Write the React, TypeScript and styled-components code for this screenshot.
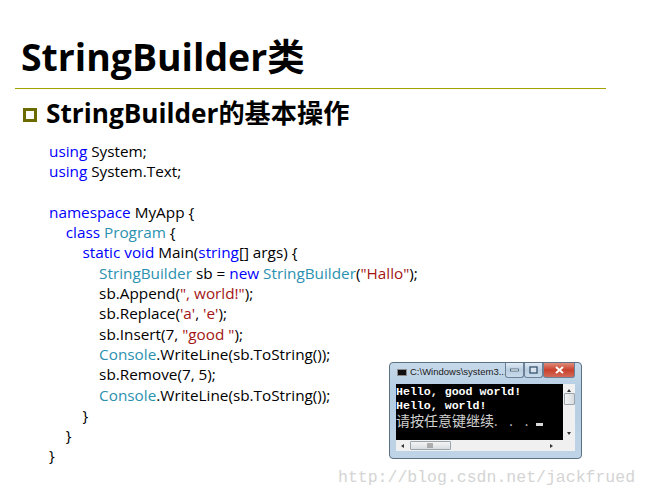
import React from "react";
import styled, { createGlobalStyle } from "styled-components";

const GlobalStyle = createGlobalStyle`
  html, body {
    margin: 0;
    padding: 0;
    background: #ffffff;
  }
`;

const Slide = styled.div`
  position: relative;
  width: 648px;
  height: 497px;
  overflow: hidden;
  background: #ffffff;
  font-family: "Open Sans", "Noto Sans CJK SC", sans-serif;
  color: #000000;
`;

const Title = styled.h1`
  margin: 0;
  padding: 32px 0 0 21px;
  height: 56px;
  font-size: 37.4px;
  line-height: 50px;
  font-weight: 700;
`;

const Rule = styled.div`
  margin-left: 15px;
  width: 591px;
  height: 1px;
  background: #a3a300;
`;

const Heading = styled.div`
  display: flex;
  align-items: center;
  gap: 9px;
  padding: 6px 0 0 23px;
  height: 36px;
  font-size: 26.2px;
  line-height: 36px;
  font-weight: 700;
`;

const Bullet = styled.span`
  display: block;
  box-sizing: border-box;
  width: 14px;
  height: 14px;
  margin-top: 4px;
  border: 3px solid #6b6b00;
  background: #ffffff;
`;

const Code = styled.div`
  margin: 10px 0 0 49px;
  font-size: 15.3px;
  line-height: 20.3px;
`;

const Line = styled.div<{ $depth?: number }>`
  height: 20.3px;
  white-space: pre;
  padding-left: ${(p) => (p.$depth ?? 0) * 16.7}px;
`;

const Kw = styled.span`
  color: #0000ff;
`;
const Type = styled.span`
  color: #2b91af;
`;
const Str = styled.span`
  color: #a31515;
`;

const ConsoleWindow = styled.div`
  position: absolute;
  left: 389px;
  top: 362px;
  box-sizing: border-box;
  width: 193px;
  height: 97px;
  padding: 0 6px 6px 6px;
  display: flex;
  flex-direction: column;
  border: 1px solid #5b7184;
  border-radius: 4px;
  background: linear-gradient(#c6d9ea, #b5cde2 30%, #bfd4e6);
`;

const TitleBar = styled.div`
  height: 21px;
  display: flex;
  align-items: flex-start;
  gap: 3px;
  font-family: "Liberation Sans", sans-serif;
  font-size: 9.5px;
  line-height: 18px;
  color: #1a1a1a;
`;

const AppIcon = styled.span`
  flex: none;
  width: 10px;
  height: 7px;
  margin: 6px 0 0 1px;
  background: #111111;
  border: 1px solid #8a8a8a;
  box-sizing: border-box;
`;

const TitleText = styled.span`
  flex: 1;
  min-width: 0;
  white-space: nowrap;
`;

const Controls = styled.div`
  flex: none;
  display: flex;
`;

const ControlButton = styled.span<{ $kind: "small" | "close" }>`
  display: flex;
  align-items: center;
  justify-content: center;
  box-sizing: border-box;
  width: ${(p) => (p.$kind === "close" ? 32 : 19)}px;
  height: 15px;
  border: 1px solid #6c8198;
  border-top: none;
  border-radius: 0 0 3px 3px;
  background: ${(p) =>
    p.$kind === "close"
      ? "linear-gradient(#e08d7c, #c9412c 50%, #d26a58)"
      : "linear-gradient(#e0ebf5, #b8cde0 50%, #c9dbea)"};
`;

const ConsoleBody = styled.div`
  display: grid;
  grid-template-columns: 167px 12px;
  grid-template-rows: 56px 11px;
`;

const Screen = styled.div`
  position: relative;
  background: #000000;
  color: #ffffff;
  padding: 1px 0 0 0;
  font-family: "Liberation Mono", "Noto Sans CJK SC", monospace;
  font-size: 11.6px;
  line-height: 14px;
  font-weight: 700;
  white-space: pre;
`;

const PromptLine = styled.div`
  font-family: "Noto Sans CJK SC", sans-serif;
  font-weight: 400;
  font-size: 14px;
  line-height: 15px;
  color: #d0d0d0;
`;

const PromptDots = styled.span`
  letter-spacing: 4.4px;
  font-size: 13px;
`;

const Caret = styled.span`
  position: absolute;
  left: 140px;
  top: 39px;
  width: 7px;
  height: 3px;
  background: #d8d8d8;
`;

const VScroll = styled.div`
  display: flex;
  flex-direction: column;
  align-items: center;
  background: #f0f0f0;
  color: #333333;
`;

const VThumb = styled.div`
  box-sizing: border-box;
  width: 11px;
  height: 12px;
  margin: 1px 0 auto;
  border: 1px solid #9aa5ad;
  border-radius: 1px;
  background: linear-gradient(90deg, #f4f4f4, #d9dde0);
`;

const Arrow = styled.span<{ $dir: "up" | "down" | "left" | "right" }>`
  display: block;
  width: 0;
  height: 0;
  border: 2px solid transparent;
  ${(p) =>
    p.$dir === "up"
      ? "border-bottom: 3px solid #333; border-top: 0; margin-top: 5px;"
      : p.$dir === "down"
      ? "border-top: 3px solid #333; border-bottom: 0; margin-bottom: 5px;"
      : p.$dir === "left"
      ? "border-right: 3px solid #333; border-left: 0;"
      : "border-left: 3px solid #333; border-right: 0;"}
`;

const HScroll = styled.div`
  display: flex;
  align-items: center;
  padding: 0 10px 0 5px;
  background: #f0f0f0;
`;

const HThumb = styled.div`
  box-sizing: border-box;
  display: flex;
  align-items: center;
  justify-content: center;
  width: 41px;
  height: 9px;
  margin: 0 auto 0 6px;
  border: 1px solid #9aa5ad;
  border-radius: 1px;
  background: linear-gradient(#f4f4f4, #d9dde0);
`;

const Corner = styled.div`
  background: #f0f0f0;
`;

const Watermark = styled.div`
  position: absolute;
  left: 338px;
  top: 467px;
  font-family: "Liberation Mono", monospace;
  font-size: 16.5px;
  line-height: 22px;
  color: #d4d4d4;
  white-space: pre;
`;

export default function App() {
  return (
    <Slide>
      <GlobalStyle />
      <Title>StringBuilder类</Title>
      <Rule />
      <Heading>
        <Bullet />
        StringBuilder的基本操作
      </Heading>
      <Code>
        <Line><Kw>using</Kw> System;</Line>
        <Line><Kw>using</Kw> System.Text;</Line>
        <Line />
        <Line><Kw>namespace</Kw> MyApp {"{"}</Line>
        <Line $depth={1}><Kw>class</Kw> <Type>Program</Type> {"{"}</Line>
        <Line $depth={2}><Kw>static</Kw> <Kw>void</Kw> Main(<Kw>string</Kw>[] args) {"{"}</Line>
        <Line $depth={3}><Type>StringBuilder</Type> sb = <Kw>new</Kw> <Type>StringBuilder</Type>(<Str>"Hallo"</Str>);</Line>
        <Line $depth={3}>sb.Append(<Str>", world!"</Str>);</Line>
        <Line $depth={3}>sb.Replace(<Str>'a'</Str>, <Str>'e'</Str>);</Line>
        <Line $depth={3}>sb.Insert(7, <Str>"good "</Str>);</Line>
        <Line $depth={3}><Type>Console</Type>.WriteLine(sb.ToString());</Line>
        <Line $depth={3}>sb.Remove(7, 5);</Line>
        <Line $depth={3}><Type>Console</Type>.WriteLine(sb.ToString());</Line>
        <Line $depth={2}>{"}"}</Line>
        <Line $depth={1}>{"}"}</Line>
        <Line>{"}"}</Line>
      </Code>

      <ConsoleWindow>
        <TitleBar>
          <AppIcon />
          <TitleText>C:\Windows\system3...</TitleText>
          <Controls>
            <ControlButton $kind="small">
              <svg width="9" height="4" viewBox="0 0 9 4"><rect x="0.5" y="1" width="8" height="2" fill="#ffffff" stroke="#2c4a66" strokeWidth="0.7" /></svg>
            </ControlButton>
            <ControlButton $kind="small">
              <svg width="9" height="8" viewBox="0 0 9 8"><rect x="1" y="1" width="7" height="6" fill="#ffffff" fillOpacity="0.4" stroke="#2c4a66" strokeWidth="1.2" /></svg>
            </ControlButton>
            <ControlButton $kind="close">
              <svg width="9" height="8" viewBox="0 0 9 8"><path d="M1 1l7 6M8 1L1 7" stroke="#ffffff" strokeWidth="2" /></svg>
            </ControlButton>
          </Controls>
        </TitleBar>
        <ConsoleBody>
          <Screen>
            <div>Hello, good world!</div>
            <div>Hello, world!</div>
            <PromptLine>请按任意键继续<PromptDots>. . .</PromptDots></PromptLine>
            <Caret />
          </Screen>
          <VScroll>
            <Arrow $dir="up" />
            <VThumb />
            <Arrow $dir="down" />
          </VScroll>
          <HScroll>
            <Arrow $dir="left" />
            <HThumb>
              <svg width="7" height="5" viewBox="0 0 7 5"><path d="M1 0v5M3 0v5M5 0v5" stroke="#707070" strokeWidth="1" /></svg>
            </HThumb>
            <Arrow $dir="right" />
          </HScroll>
          <Corner />
        </ConsoleBody>
      </ConsoleWindow>

      <Watermark>http://blog.csdn.net/jackfrued</Watermark>
    </Slide>
  );
}
